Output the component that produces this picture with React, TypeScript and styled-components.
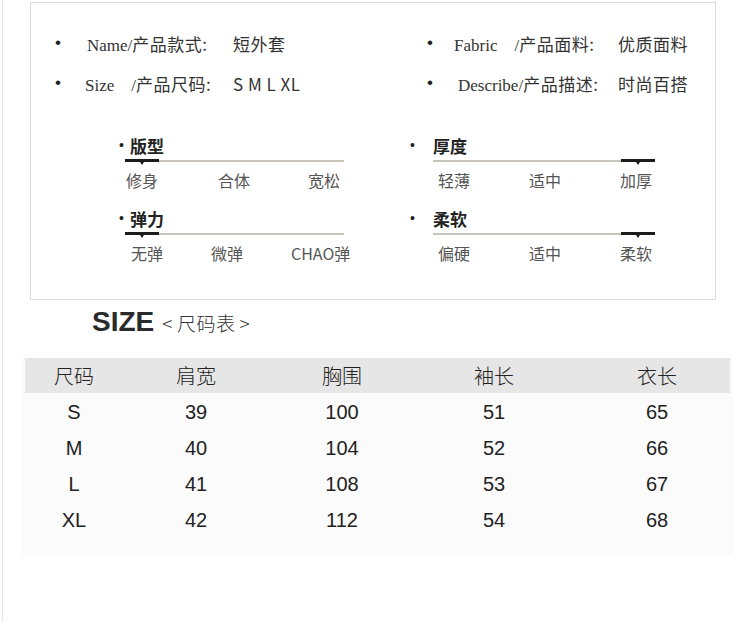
import styled, { createGlobalStyle } from "styled-components";

const GlobalStyle = createGlobalStyle`
  html, body {
    margin: 0;
    padding: 0;
    background: #ffffff;
  }
  body {
    font-family: "Liberation Sans", "Noto Sans CJK SC", sans-serif;
    color: #333;
  }
`;

const info = [
  { label: "Name/", cjk: "产品款式:", value: "短外套", indent: 32, width: 146 },
  { label: "Fabric    /", cjk: "产品面料:", value: "优质面料", indent: 27, width: 164 },
  { label: "Size    /", cjk: "产品尺码:", value: "S M L XL", indent: 30, width: 148 },
  { label: "Describe/", cjk: "产品描述:", value: "时尚百搭", indent: 31, width: 160 },
];

type Side = "left" | "right";

interface SliderData {
  title: string;
  labels: string[];
  stops: number[];
  knob: Side;
}

const leftSliders: SliderData[] = [
  { title: "版型", labels: ["修身", "合体", "宽松"], stops: [1, 93, 183], knob: "left" },
  { title: "弹力", labels: ["无弹", "微弹", "CHAO弹"], stops: [6, 86, 166], knob: "left" },
];

const rightSliders: SliderData[] = [
  { title: "厚度", labels: ["轻薄", "适中", "加厚"], stops: [5, 96, 187], knob: "right" },
  { title: "柔软", labels: ["偏硬", "适中", "柔软"], stops: [5, 96, 187], knob: "right" },
];

const sizeHead = ["尺码", "肩宽", "胸围", "袖长", "衣长"];
const sizeRows = [
  ["S", "39", "100", "51", "65"],
  ["M", "40", "104", "52", "66"],
  ["L", "41", "108", "53", "67"],
  ["XL", "42", "112", "54", "68"],
];

export default function App() {
  return (
    <>
      <GlobalStyle />
      <Page>
        <InfoBox>
          <InfoGrid>
            {info.map((item) => (
              <InfoItem key={item.cjk}>
                <Bullet $indent={item.indent}>•</Bullet>
                <InfoLabel $width={item.width}>
                  {item.label}
                  <Cjk>{item.cjk}</Cjk>
                </InfoLabel>
                <InfoValue>{item.value}</InfoValue>
              </InfoItem>
            ))}
          </InfoGrid>
          <SliderGrid>
            <SliderColumn $offset={94} $width={219}>
              {leftSliders.map((s) => (
                <Slider key={s.title} data={s} bulletHang={11} titleIndent={5} />
              ))}
            </SliderColumn>
            <SliderColumn $offset={90} $width={222}>
              {rightSliders.map((s) => (
                <Slider key={s.title} data={s} bulletHang={23} titleIndent={0} />
              ))}
            </SliderColumn>
          </SliderGrid>
        </InfoBox>

        <SizeTitle>
          <SizeWord>SIZE</SizeWord>
          <SizeSub>
            <Angle>&lt;</Angle>尺码表<Angle>&gt;</Angle>
          </SizeSub>
        </SizeTitle>

        <Table>
          <HeadRow>
            {sizeHead.map((h) => (
              <Cell key={h}>{h}</Cell>
            ))}
          </HeadRow>
          {sizeRows.map((row) => (
            <BodyRow key={row[0]}>
              {row.map((c, i) => (
                <Cell key={i}>{c}</Cell>
              ))}
            </BodyRow>
          ))}
        </Table>
      </Page>
    </>
  );
}

function Slider({
  data,
  bulletHang,
  titleIndent,
}: {
  data: SliderData;
  bulletHang: number;
  titleIndent: number;
}) {
  const { title, labels, stops, knob } = data;
  const cols = stops
    .slice(1)
    .map((s, i) => `${s - stops[i]}px`)
    .concat("auto")
    .join(" ");
  return (
    <SliderBlock>
      <SliderHead $indent={titleIndent}>
        <HeadBullet $hang={bulletHang}>•</HeadBullet>
        <SliderTitle>{title}</SliderTitle>
      </SliderHead>
      <Track>
        <Knob $side={knob} />
      </Track>
      <Labels $pad={stops[0]} $cols={cols}>
        {labels.map((l) => (
          <span key={l}>{l}</span>
        ))}
      </Labels>
    </SliderBlock>
  );
}

// styling
const Page = styled.div`
  box-sizing: border-box;
  width: 747px;
  min-height: 622px;
  margin-left: 2px;
  padding-top: 2px;
  border-left: 1px solid #e6e6e6;
`;

const InfoBox = styled.div`
  box-sizing: border-box;
  width: 686px;
  height: 298px;
  margin-left: 27px;
  border: 1px solid #dcdcdc;
  padding-top: 20px;
`;

const InfoGrid = styled.div`
  display: grid;
  grid-template-columns: 372px 1fr;
  grid-auto-rows: 40px;
  padding-left: 24px;
`;

const InfoItem = styled.div`
  display: flex;
  align-items: center;
  font-family: "Liberation Serif", "Noto Sans CJK SC", serif;
  font-size: 17px;
  color: #333;
  white-space: pre;
`;

const Bullet = styled.span<{ $indent: number }>`
  width: ${(p) => p.$indent}px;
  font-family: "Liberation Sans", sans-serif;
  font-size: 17px;
  color: #222;
`;

const InfoLabel = styled.span<{ $width: number }>`
  width: ${(p) => p.$width}px;
`;

const Cjk = styled.span`
  font-family: "Noto Sans CJK SC", sans-serif;
  font-size: 17px;
  letter-spacing: 0.5px;
`;

const InfoValue = styled.span`
  font-family: "Noto Sans CJK SC", sans-serif;
  font-size: 17px;
  letter-spacing: 0.5px;
`;

const SliderGrid = styled.div`
  display: grid;
  grid-template-columns: 312px 1fr;
  margin-top: 34px;
`;

const SliderColumn = styled.div<{ $offset: number; $width: number }>`
  display: flex;
  flex-direction: column;
  gap: 20px;
  margin-left: ${(p) => p.$offset}px;
  width: ${(p) => p.$width}px;
`;

const SliderBlock = styled.div`
  display: flex;
  flex-direction: column;
`;

const SliderHead = styled.div<{ $indent: number }>`
  display: flex;
  align-items: center;
  height: 20px;
  margin-top: -2px;
  margin-bottom: 2px;
  padding-left: ${(p) => p.$indent}px;
`;

const HeadBullet = styled.span<{ $hang: number }>`
  width: ${(p) => p.$hang}px;
  margin-left: -${(p) => p.$hang}px;
  font-size: 14px;
  color: #222;
  font-family: "Liberation Sans", sans-serif;
`;

const SliderTitle = styled.span`
  font-family: "Noto Sans CJK SC", sans-serif;
  font-weight: 700;
  font-size: 17px;
  color: #222;
`;

const Track = styled.div`
  position: relative;
  height: 2px;
  margin-top: 3px;
  background: #c8c4bb;
`;

const Knob = styled.div<{ $side: Side }>`
  position: absolute;
  top: -1px;
  ${(p) => p.$side}: 0;
  width: 34px;
  height: 3px;
  background: #1c1c1c;
  &::after {
    content: "";
    position: absolute;
    left: 15px;
    top: 3px;
    border-left: 2px solid transparent;
    border-right: 2px solid transparent;
    border-top: 3px solid #1c1c1c;
  }
`;

const Labels = styled.div<{ $pad: number; $cols: string }>`
  display: grid;
  grid-template-columns: ${(p) => p.$cols};
  padding-left: ${(p) => p.$pad}px;
  margin-top: 8px;
  line-height: 20px;
  font-family: "Noto Sans CJK SC", sans-serif;
  font-size: 16px;
  color: #555;
  white-space: nowrap;
`;

const SizeTitle = styled.div`
  display: flex;
  align-items: center;
  gap: 8px;
  height: 38px;
  margin-top: 3px;
  padding-left: 89px;
`;

const SizeWord = styled.span`
  font-family: "Liberation Sans", sans-serif;
  font-weight: 700;
  font-size: 28px;
  color: #2a2a2a;
`;

const SizeSub = styled.span`
  font-family: "Noto Sans CJK SC", sans-serif;
  font-size: 19px;
  font-weight: 300;
  letter-spacing: 0.5px;
  color: #333;
`;

const Angle = styled.span`
  display: inline-block;
  margin: 0 4px;
  &:first-child {
    margin-left: 0;
  }
`;

const Table = styled.div`
  box-sizing: border-box;
  width: 711px;
  margin: 17px 0 0 19px;
  padding-bottom: 18px;
  background: #fbfbfb;
`;

const Row = styled.div`
  display: grid;
  grid-template-columns: 98px 146px 146px 158px 168px;
  align-items: center;
  font-size: 20px;
  color: #222;
`;

const HeadRow = styled(Row)`
  height: 35px;
  margin: 0 3px 1px;
  background: #e6e6e6;
  font-family: "Noto Sans CJK SC", sans-serif;
  font-weight: 300;
`;

const BodyRow = styled(Row)`
  height: 36px;
  padding: 0 3px;
  font-family: "Liberation Sans", sans-serif;
`;

const Cell = styled.div`
  text-align: center;
  line-height: 1;
`;
